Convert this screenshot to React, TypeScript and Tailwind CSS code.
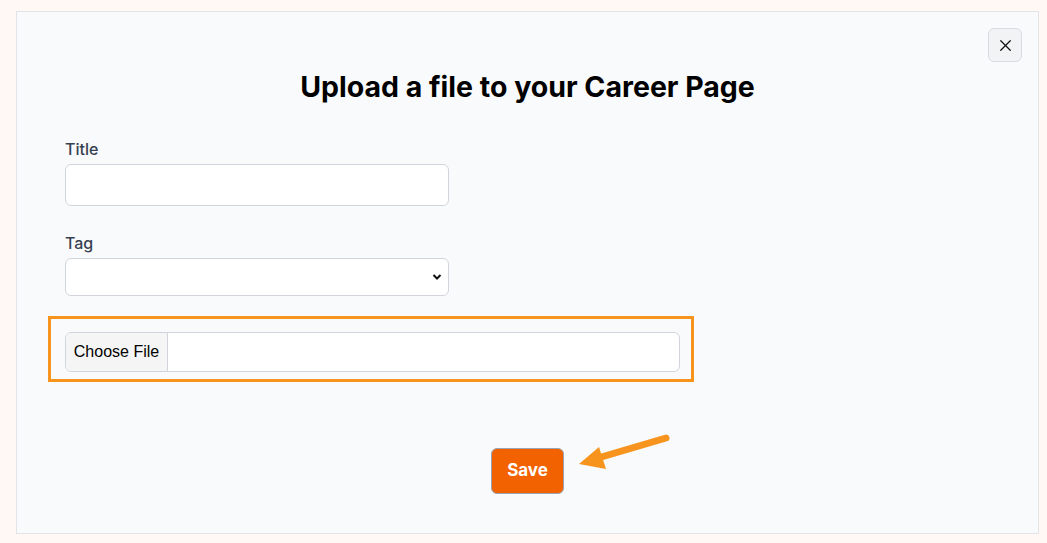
import { X } from "lucide-react";

const Field = ({ label, children }: { label: string; children: React.ReactNode }) => (
  <div className="flex flex-col">
    <label className="text-[16px] font-medium text-[#374151] leading-[20px] mb-[5px]">{label}</label>
    {children}
  </div>
);

const App = () => {
  return (
    <div className="relative w-[1047px] h-[543px] bg-[#fff8f5] pt-[11px] pl-[16px] pr-[8px] pb-[9px] font-['Inter',sans-serif]">
      <div className="relative w-full h-full bg-[#f9fafb] border border-[#e3e4e8]">
        <button className="absolute top-[16px] right-[16px] w-[34px] h-[34px] flex items-center justify-center rounded-md border border-[#d9dbe0] bg-[#f2f3f5] text-[#111]">
          <X size={19} strokeWidth={1.6} />
        </button>

        <h1 className="text-center text-[28.5px] font-bold text-black leading-[32px] pt-[59px]">
          Upload a file to your Career Page
        </h1>

        <div className="flex flex-col px-[48px] pt-[36px]">
          <Field label="Title">
            <input className="w-[384px] h-[42px] rounded-md border border-[#d1d5db] bg-white" />
          </Field>

          <div className="mt-[27px]">
            <Field label="Tag">
              <div className="relative w-[384px] h-[38px] rounded-md border border-[#d1d5db] bg-white">
                <svg className="absolute right-[6px] top-[14px]" width="10" height="8" viewBox="0 0 10 8">
                  <path d="M1.5 2 L5 5.5 L8.5 2" fill="none" stroke="#111" strokeWidth="2" />
                </svg>
              </div>
            </Field>
          </div>

          <div className="mt-[20px] -ml-[17px] w-[646px] h-[66px] border-[3px] border-[#f7941d] pl-[14px] pt-[12px]">
            <div className="flex w-[615px] h-[40px] mt-[1px] rounded-md border border-[#d1d5db] bg-white overflow-hidden font-['Liberation_Sans',Arial,sans-serif]">
              <div className="w-[102px] h-full flex items-center justify-center bg-[#f5f5f5] border-r border-[#d1d5db] text-[16px] text-black">
                Choose File
              </div>
            </div>
          </div>

          <div className="flex justify-center mt-[66px] -ml-[48px] -mr-[48px]">
            <button className="w-[73px] h-[46px] rounded-md bg-[#f36200] border border-[#9aa3b5] text-white font-bold text-[17px]">
              Save
            </button>
          </div>
        </div>
      </div>

      <svg className="absolute left-0 top-0 pointer-events-none" width="1047" height="543">
        <line x1="666" y1="438" x2="598" y2="458" stroke="#f7941d" strokeWidth="7" strokeLinecap="round" />
        <polygon points="579,464 599,447 606,469" fill="#f7941d" />
      </svg>
    </div>
  );
};

export default App;
